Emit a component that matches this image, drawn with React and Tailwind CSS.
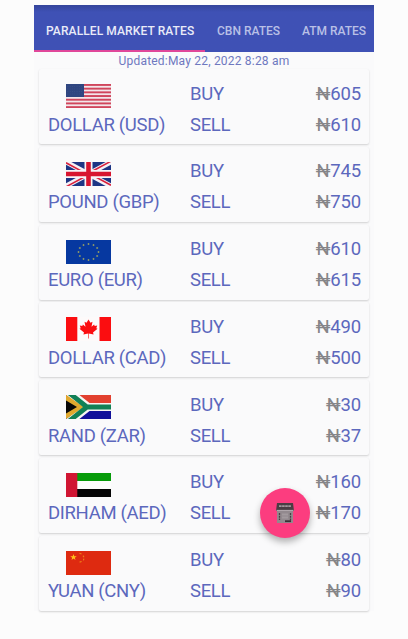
import React from "react";

const Usa = () => (
  <svg viewBox="0 0 45 24" className="block h-6 w-[45px]">
    <rect width="45" height="24" fill="#f3e6ea" />
    {[0, 1, 2, 3, 4, 5, 6].map((i) => (
      <rect key={i} y={i * 3.692} width="45" height="1.9" fill="#d0455c" />
    ))}
    <rect width="18" height="13" fill="#2f4680" />
    {[2, 4.5, 7, 9.5].map((y) => (
      <path key={y} d={`M1.5 ${y + 0.5}h15`} stroke="#4a5f94" strokeWidth=".5" strokeDasharray=".7 1.6" />
    ))}
  </svg>
);

const Uk = () => (
  <svg viewBox="0 0 45 24" className="block h-6 w-[45px]">
    <rect width="45" height="24" fill="#1d3584" />
    <path d="M0 0L45 24M45 0L0 24" stroke="#f4f1f6" strokeWidth="5" />
    <path d="M0 0.8L22 12.6M45 23.2L23 11.4M45 -0.8L23 11M0 24.8L22 13" stroke="#d8203c" strokeWidth="1.6" />
    <path d="M22.5 0v24M0 12h45" stroke="#f8f4f7" strokeWidth="8" />
    <path d="M22.5 0v24M0 12h45" stroke="#d8152f" strokeWidth="4.6" />
  </svg>
);

const Eu = () => (
  <svg viewBox="0 0 45 24" className="block h-6 w-[45px]">
    <rect width="45" height="24" fill="#0638a0" />
    {[0, 30, 60, 90, 120, 150, 180, 210, 240, 270, 300, 330].map((a) => {
      const x = 22.5 + 10 * Math.cos((a * Math.PI) / 180);
      const y = 12 + 8 * Math.sin((a * Math.PI) / 180);
      return <path key={a} d={`M${x - 1} ${y}h2M${x} ${y - 1}v2`} stroke="#8f9a68" strokeWidth=".9" />;
    })}
  </svg>
);

const Canada = () => (
  <svg viewBox="0 0 45 24" className="block h-6 w-[45px]">
    <rect width="45" height="24" fill="#fdfafa" />
    <rect width="11.3" height="24" fill="#fb0d10" />
    <rect x="33.5" width="11.5" height="24" fill="#fb0d10" />
    <path
      d="M22.5 2.5l-2 3.2-2-.9 1 5-2.6-2.2-.6 1.3-2.5-.4.9 2.7-1.2.6 4.5 3.8-.6 1.8 4.8-.8v4.8h.6v-4.8l4.8.8-.6-1.8 4.5-3.8-1.2-.6.9-2.7-2.5.4-.6-1.3-2.6 2.2 1-5-2 .9z"
      fill="#fb0d10"
    />
  </svg>
);

const SouthAfrica = () => (
  <svg viewBox="0 0 45 24" className="block h-6 w-[45px]">
    <rect width="45" height="12" fill="#e2402f" />
    <rect y="12" width="45" height="12" fill="#10109a" />
    <path d="M3 -3L22 12L3 27M20 12H45" fill="none" stroke="#f7f5f2" strokeWidth="8.2" />
    <path d="M0 0V24L18 12z" fill="#e0a92e" />
    <path d="M2 -3L21 12L2 27M20 12H45" fill="none" stroke="#118056" strokeWidth="4.8" />
    <path d="M0 3.2V20.8L14.5 12z" fill="#e0a92e" />
    <path d="M0 5.6V18.4L11 12z" fill="#080808" />
  </svg>
);

const Uae = () => (
  <svg viewBox="0 0 45 24" className="block h-6 w-[45px]">
    <rect width="45" height="24" fill="#fdfdfd" />
    <rect width="45" height="8" fill="#069b09" />
    <rect y="16" width="45" height="8" fill="#050505" />
    <rect width="11.3" height="24" fill="#d01532" />
  </svg>
);

const China = () => (
  <svg viewBox="0 0 45 24" className="block h-6 w-[45px]">
    <rect width="45" height="24" fill="#de2a10" />
    <path d="M7.5 3l.8 2.2h2.4L8.8 6.7l.7 2.3-2-1.4-2 1.4.7-2.3-1.9-1.5h2.4z" fill="#ffc51c" />
    <path d="M13.5 2.3l2 .8M17 4.6l1 1.6M17.9 7.6l-.5 1.8M15.6 10.5l-2 .6" stroke="#ee8118" strokeWidth="1.1" />
  </svg>
);

const rates = [
  { Flag: Usa, name: "DOLLAR (USD)", buy: 605, sell: 610 },
  { Flag: Uk, name: "POUND (GBP)", buy: 745, sell: 750 },
  { Flag: Eu, name: "EURO (EUR)", buy: 610, sell: 615 },
  { Flag: Canada, name: "DOLLAR (CAD)", buy: 490, sell: 500 },
  { Flag: SouthAfrica, name: "RAND (ZAR)", buy: 30, sell: 37 },
  { Flag: Uae, name: "DIRHAM (AED)", buy: 160, sell: 170 },
  { Flag: China, name: "YUAN (CNY)", buy: 80, sell: 90 },
];

const Amount = ({ value }) => (
  <span className="pt-[0.5px] text-right tracking-[-0.15px]">
    <span className="text-[#858588]">₦</span>
    {value}
  </span>
);

const RateCard = ({ Flag, name, buy, sell }) => (
  <div className="h-[77.75px] px-[5px] pt-[2px] pb-[0.75px]">
    <div className="grid h-full grid-cols-[142px_1fr_80px] grid-rows-[31px_31px] rounded-[2px] bg-[#fafafb] pt-[9px] pr-[8px] pl-[9px] text-[18.5px] leading-[31px] tracking-[-0.32px] whitespace-nowrap text-[#5c68bd] shadow-[0_1px_2px_rgba(0,0,0,0.17)]">
      <div className="pt-[6px] pl-[18px]">
        <Flag />
      </div>
      <span className="pt-[0.5px]">BUY</span>
      <Amount value={buy} />
      <span className="pt-[0.5px]">{name}</span>
      <span className="pt-[0.5px]">SELL</span>
      <Amount value={sell} />
    </div>
  </div>
);

const Calculator = () => (
  <svg viewBox="0 0 20 22" className="h-[22px] w-5">
    <path d="M2 1h16l1 8H1z" fill="#4a3d43" />
    <path d="M4 4.2h12" stroke="#a3979c" strokeWidth="1.8" strokeDasharray="2.6 .5" />
    <path d="M2 8.5h16V21H2z" fill="#92898e" />
    <path d="M1.5 8.4h17" stroke="#b8b0b4" strokeWidth="1" />
    <path d="M4.5 11v7M15.5 11v9" stroke="#4a4045" strokeWidth="1.3" strokeDasharray="2 .8" />
    <path d="M10 19.2h6" stroke="#3a3035" strokeWidth="1.8" />
    <path d="M7 12.5h6M7 15.5h6" stroke="#a29a9e" strokeWidth="1.8" />
  </svg>
);

export default function App() {
  return (
    <div className="h-[639px] w-[408px] overflow-hidden bg-[#fcfcfc] pt-[5px] pl-[34px] font-['Roboto',sans-serif]">
      <main className="relative h-[606px] w-[340px] bg-[#fafafb]">
        <nav className="flex h-[47px] bg-[#3f51b5] bg-linear-to-b from-[#34459b] from-0% to-[#3f51b5] to-15% text-[12px] leading-[52px] font-medium whitespace-nowrap text-[#b9c0e6]">
          <div className="w-[171px] border-b-[2.5px] border-[#e0479a] pl-[12px] tracking-[0.1px] text-[#e9ebf8]">PARALLEL MARKET RATES</div>
          <div className="w-[86px] pl-[12px]">CBN RATES</div>
          <div className="pl-[11px]">ATM RATES</div>
        </nav>
        <p className="h-[15px] text-center text-[12px] leading-[18px] tracking-[0.2px] text-[#6e78bf]">Updated:May 22, 2022 8:28 am</p>
        <section>
          {rates.map((rate) => (
            <RateCard key={rate.name} {...rate} />
          ))}
        </section>
        <button
          aria-label="Calculator"
          className="absolute top-[483px] left-[226px] flex size-[50px] items-center justify-center rounded-full bg-[#fc3d7f] shadow-[0_4px_7px_rgba(0,0,0,0.3)]"
        >
          <Calculator />
        </button>
      </main>
    </div>
  );
}
